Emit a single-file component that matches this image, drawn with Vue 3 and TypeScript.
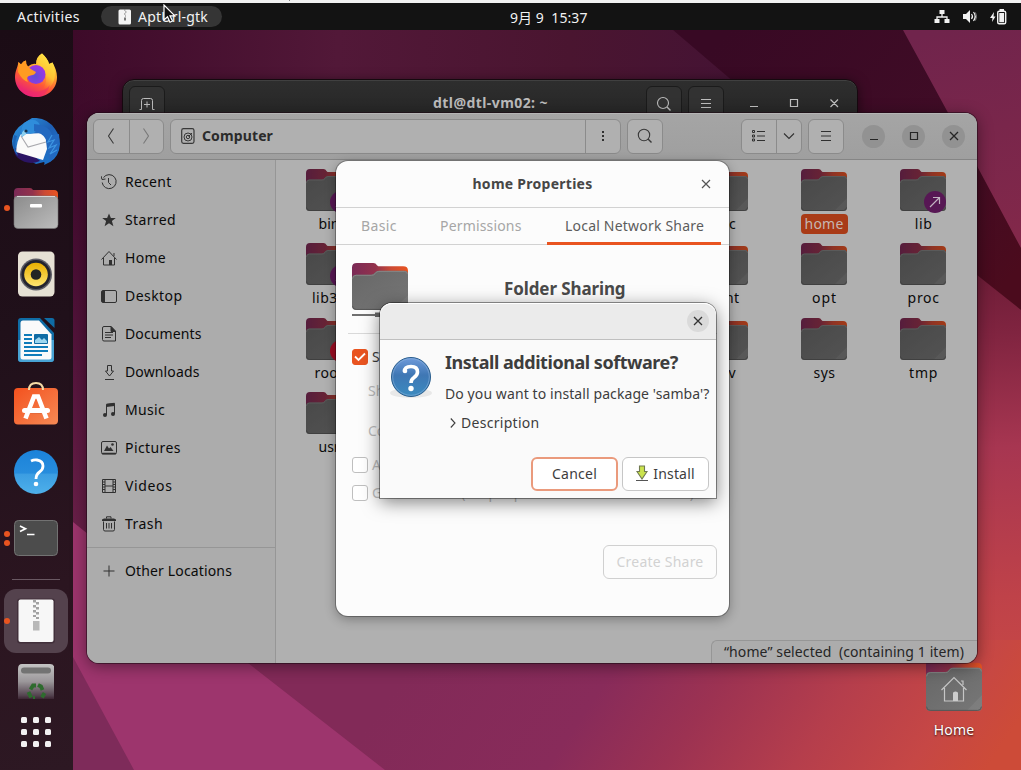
<script setup lang="ts">
interface Place { name: string; icon: string; width: number }
interface Entry { name: string; col: number; row: number; width: number; emblem?: 'link' | 'locked'; selected?: boolean }

const places: Place[] = [
  { name: 'Recent', icon: 'recent', width: 45.5 },
  { name: 'Starred', icon: 'star', width: 50 },
  { name: 'Home', icon: 'home', width: 40 },
  { name: 'Desktop', icon: 'desktop', width: 56.5 },
  { name: 'Documents', icon: 'doc', width: 75.5 },
  { name: 'Downloads', icon: 'download', width: 73.5 },
  { name: 'Music', icon: 'music', width: 39 },
  { name: 'Pictures', icon: 'picture', width: 55 },
  { name: 'Videos', icon: 'video', width: 46.5 },
  { name: 'Trash', icon: 'trash', width: 37 },
]

const entries: Entry[] = [
  { name: 'bin', col: 1, row: 1, width: 20, emblem: 'link' },
  { name: 'etc', col: 5, row: 1, width: 22 },
  { name: 'home', col: 6, row: 1, width: 38, selected: true },
  { name: 'lib', col: 7, row: 1, width: 16.5, emblem: 'link' },
  { name: 'lib32', col: 1, row: 2, width: 33, emblem: 'link' },
  { name: 'mnt', col: 5, row: 2, width: 27 },
  { name: 'opt', col: 6, row: 2, width: 24 },
  { name: 'proc', col: 7, row: 2, width: 31 },
  { name: 'root', col: 1, row: 3, width: 28, emblem: 'locked' },
  { name: 'srv', col: 5, row: 3, width: 21 },
  { name: 'sys', col: 6, row: 3, width: 21 },
  { name: 'tmp', col: 7, row: 3, width: 28 },
  { name: 'usr', col: 1, row: 4, width: 20 },
]

const dockApps = ['firefox', 'thunderbird', 'files', 'rhythmbox', 'writer', 'software', 'help', 'terminal']
const running: Record<string, number> = { files: 1, terminal: 2 }

// Tracks a label so that its text occupies the given width.
const vFit = {
  mounted(el: HTMLElement, binding: { value?: number }) {
    if (!binding.value) return
    const range = document.createRange()
    range.selectNodeContents(el)
    const natural = range.getBoundingClientRect().width
    const count = (el.textContent ?? '').trim().length
    el.style.letterSpacing = `${((binding.value + 1 - natural) / count).toFixed(3)}px`
  },
}
</script>

<template>
  <div class="screen">
    <svg class="wallpaper" viewBox="0 0 1021 770" preserveAspectRatio="none">
      <defs>
        <linearGradient id="wBase" gradientUnits="userSpaceOnUse" x1="73" y1="30" x2="735" y2="60">
          <stop offset="0" stop-color="#3d0a29" /><stop offset=".4" stop-color="#521838" /><stop offset=".75" stop-color="#4a1530" /><stop offset="1" stop-color="#451334" />
        </linearGradient>
        <linearGradient id="wLeft" gradientUnits="userSpaceOnUse" x1="80" y1="30" x2="80" y2="540">
          <stop offset="0" stop-color="#3d0a29" stop-opacity="0" /><stop offset=".5" stop-color="#4c1036" /><stop offset="1" stop-color="#6a2049" />
        </linearGradient>
        <linearGradient id="wDark" gradientUnits="userSpaceOnUse" x1="720" y1="40" x2="1000" y2="290">
          <stop offset="0" stop-color="#380924" /><stop offset=".6" stop-color="#400c26" /><stop offset="1" stop-color="#4b0b1d" />
        </linearGradient>
        <linearGradient id="wRight" gradientUnits="userSpaceOnUse" x1="940" y1="30" x2="1000" y2="240">
          <stop offset="0" stop-color="#70244c" /><stop offset="1" stop-color="#82284a" />
        </linearGradient>
        <linearGradient id="wEdge" gradientUnits="userSpaceOnUse" x1="980" y1="275" x2="1010" y2="770">
          <stop offset="0" stop-color="#6f1d38" /><stop offset=".12" stop-color="#802440" /><stop offset=".35" stop-color="#a73651" /><stop offset=".65" stop-color="#bf4249" /><stop offset=".78" stop-color="#c54646" /><stop offset="1" stop-color="#cc4a3b" />
        </linearGradient>
        <linearGradient id="wFloor" gradientUnits="userSpaceOnUse" x1="480" y1="560" x2="925" y2="860">
          <stop offset="0" stop-color="#822a58" /><stop offset=".32" stop-color="#882b5a" /><stop offset=".5" stop-color="#9c3252" /><stop offset=".7" stop-color="#b53e4c" /><stop offset=".88" stop-color="#c64745" /><stop offset="1" stop-color="#cd4b38" />
        </linearGradient>
      </defs>
      <rect width="1021" height="770" fill="url(#wBase)" />
      <rect y="30" width="110" height="600" fill="url(#wLeft)" />
      <path d="M673 30H1021V330L860 190Z" fill="url(#wDark)" />
      <path d="M903 30H1021V248L977 166Z" fill="url(#wRight)" />
      <path d="M860 185L977 275L1021 310V770H860Z" fill="url(#wEdge)" />
      <path d="M0 640H1021V770H0Z" fill="url(#wFloor)" />
      <path d="M0 467L73 522L248 663L385 770H0Z" fill="#9d356d" />
      <path d="M0 526L73 657L134 770H0Z" fill="#7e2b5a" />
    </svg>
    <svg class="defs" width="0" height="0">
      <defs>
        <linearGradient id="gBack" x1="0" y1="0" x2="1" y2="0">
          <stop offset="0" stop-color="#7a2a56" /><stop offset=".42" stop-color="#93324c" /><stop offset=".7" stop-color="#cc4a34" /><stop offset="1" stop-color="#e95420" />
        </linearGradient>
        <linearGradient id="gFront" x1="0" y1="0" x2="1" y2="1">
          <stop offset="0" stop-color="#676767" /><stop offset="1" stop-color="#777" />
        </linearGradient>
        <symbol id="folder" viewBox="0 0 46 42" preserveAspectRatio="none">
          <path d="M0 4Q0 0 4 0H17.5Q19.5 0 20.5 2L21.500 3H42Q46 3 46 7V22H0Z" fill="url(#gBack)" />
          <path d="M0 14Q0 10.500 3.500 10.500H15.500Q17.500 10.500 18.500 9Q20 7 22 7H43Q46 7 46 10V38.500Q46 42 42.500 42H3.500Q0 42 0 38.500Z" fill="url(#gFront)" />
          <path d="M0.500 14Q.5 11 3.500 11H16Q18 11 19 9.500Q20 7.500 22 7.500H43Q45.500 7.500 45.500 10" fill="none" stroke="#8a8a8a" stroke-width=".7" />
          <path d="M46 29V38.500Q46 42 42.500 42H33Z" fill="#fff" opacity=".06" />
          <path d="M.5 38.500Q.5 41.500 3.500 41.500H42.500Q45.500 41.500 45.500 38.500" fill="none" stroke="#555" stroke-width=".8" />
        </symbol>
      </defs>
    </svg>

    <div class="strip"><i></i></div>
    <header class="panel">
      <span v-fit="62" class="activities">Activities</span>
      <span class="app-pill">
        <svg width="14" height="16" viewBox="0 0 14 16"><rect x=".5" y=".5" width="12.500" height="15" rx="1.500" fill="#f4f4f4" /><path d="M6 1h1.500M7 3h1.500M6 5h1.500M7 7h1" stroke="#777" fill="none" /><rect x="6" y="8.500" width="2" height="3" fill="#777" /></svg>
        <span v-fit="69">AptUrl-gtk</span>
      </span>
      <span v-fit="76.500" class="clock">9月 9&nbsp; 15:37</span>
      <span class="tray">
        <svg width="16" height="15" viewBox="0 0 16 15"><path d="M5.500 1h5v4h-5zM.5 10h5v4h-5zM10.500 10h5v4h-5z" fill="#f2f2f2" /><path d="M8 4v4M3 11V8h10v3" stroke="#f2f2f2" stroke-width="1.300" fill="none" /></svg>
        <svg width="16" height="15" viewBox="0 0 16 15"><path d="M1 5h3l4-4v13l-4-4H1z" fill="#f2f2f2" /><path d="M9.500 5q2 2.500 0 5M11.500 3q3.500 4.500 0 9" stroke="#f2f2f2" stroke-width="1.200" fill="none" /><path d="M13.500 3.500q2 4 0 8" stroke="#888" fill="none" /></svg>
        <svg width="17" height="16" viewBox="0 0 17 16"><path d="M4 3L0 9h2.500L2 13l3.500-5.500H3.500z" fill="#f2f2f2" /><rect x="7.700" y="2.200" width="8" height="12.600" rx="1.500" fill="none" stroke="#f2f2f2" stroke-width="1.400" /><path d="M9.500 0h4.500v2H9.500zM9.300 4h4.800v9.200H9.300z" fill="#f2f2f2" /></svg>
      </span>
    </header>

    <nav class="dock">
      <div v-for="app in dockApps" :key="app" class="tile">
        <span v-if="running[app]" class="dots"><i v-for="n in running[app]" :key="n"></i></span>
        <svg v-if="app === 'firefox'" width="48" height="48" viewBox="0 0 48 48">
          <defs>
            <linearGradient id="ff" x1=".8" y1="0" x2=".3" y2="1"><stop offset="0" stop-color="#fff44f" /><stop offset=".35" stop-color="#ffb02e" /><stop offset=".65" stop-color="#ff5a35" /><stop offset="1" stop-color="#e31587" /></linearGradient>
            <linearGradient id="ffo" x1=".9" y1="0" x2=".5" y2="1"><stop offset="0" stop-color="#fff04a" /><stop offset=".6" stop-color="#ffc233" /><stop offset="1" stop-color="#ff7a2f" stop-opacity="0" /></linearGradient>
            <radialGradient id="ffg" cx=".45" cy=".6" r=".6"><stop offset="0" stop-color="#5b50d6" /><stop offset="1" stop-color="#a033e8" /></radialGradient>
          </defs>
          <path d="M30 1.500C34 5 36.500 9 37 12C39 11 40 11 40.500 10.500C43 15 45 20 45 25C45 37 36 45 24 45C12 45 3 36.500 3 25C3 19 5.500 16 6.500 10L9 12.500Q11 9 14 8.500Q13.500 12 16 14.500Q20 11 24 12Q24 5 30 1.500Z" fill="url(#ff)" />
          <path d="M30 1.500C34 5 36.500 9 37 12C39 11 40 11 40.500 10.500C44 18 44 28 39 34Q36 39 28 39Q35 34 34 25Q33 19 28 15Q23 10 25.500 6Q27 3 30 1.500Z" fill="url(#ffo)" />
          <circle cx="24" cy="22.500" r="9.500" fill="url(#ffg)" />
          <path d="M6.500 10L9 12.500Q11 9 14 8.500Q13.500 12 16 15Q20 18 24 20Q23 23 18.500 23.500Q13 24.500 16 30Q10 28 6 20Z" fill="#ff9b22" />
          <path d="M4 30Q10 41 22 40Q34 39 38 33Q35 44 24 45Q9 45 4 30Z" fill="#ee2a6b" opacity=".55" />
        </svg>
        <svg v-else-if="app === 'thunderbird'" width="48" height="48" viewBox="0 0 48 48">
          <defs><linearGradient id="tb" x1="0" y1="0" x2="1" y2="1"><stop offset="0" stop-color="#2d9be4" /><stop offset=".5" stop-color="#1f5fb4" /><stop offset="1" stop-color="#1a78d0" /></linearGradient></defs>
          <path d="M20 0Q35-1 43 11Q48 18 48 26Q47 39 38 44L32 47Q33 45 32 44L24 46L5 36Q0 31 0 23Q1 12 12 5Z" fill="url(#tb)" />
          <path d="M3 30Q1 36 6 40Q16 48 28 43L20 36Z" fill="#2b1464" />
          <path d="M9 16L33 15L35 31L31 42L4 34Q5 22 9 16Z" fill="#fafafa" />
          <path d="M9 18L16 29L34 24" fill="none" stroke="#a9a9ae" stroke-width="1.100" />
          <path d="M12 5Q20-1 26 4Q30 8 25 13Q20 17 15 15L10 19Q8 11 12 5Z" fill="#2f8ddb" />
          <path d="M10 19Q9 13 13 12Q15 14 14 16Z" fill="#8bd0f0" />
          <circle cx="14" cy="13" r="1.600" fill="#14314f" />
          <path d="M22 6Q37 7 40 17L47 16Q49 33 38 44Q36 38 36 31Q36 20 29 16L22 13Z" fill="#2369c0" />
          <path d="M40 17L36 24L42 22L37 30L44 27L38 36L45 32" fill="none" stroke="#3e97e2" stroke-width="1.200" />
          <path d="M2 17Q-1 32 6 38Q1 27 5 18Z" fill="#1b63b5" />
        </svg>
        <svg v-else-if="app === 'files'" width="48" height="48" viewBox="0 0 48 48">
          <defs><linearGradient id="fl" x1="0" y1="0" x2="1" y2="1"><stop offset="0" stop-color="#8b8b8b" /><stop offset="1" stop-color="#bdbdbd" /></linearGradient></defs>
          <path d="M2 8Q2 4 6 4H18Q20 4 21 6H42Q46 6 46 10V24H2Z" fill="url(#gBack)" />
          <rect x="2" y="12" width="44" height="32.500" rx="4" fill="url(#fl)" stroke="#777" stroke-width=".6" />
          <path d="M5 12.500H43" stroke="#d6d6d6" /><rect x="18" y="20" width="12" height="3.400" rx="1" fill="#fff" />
        </svg>
        <svg v-else-if="app === 'rhythmbox'" width="48" height="48" viewBox="0 0 48 48">
          <defs><linearGradient id="rb" x1="0" y1="0" x2="0" y2="1"><stop offset="0" stop-color="#eab000" /><stop offset="1" stop-color="#ffe570" /></linearGradient></defs>
          <rect x="6" y="1.500" width="36.500" height="45" rx="4.500" fill="#e6e1d4" />
          <circle cx="24" cy="24.500" r="16" fill="#5d5d66" /><circle cx="24" cy="24.500" r="14.500" fill="#24242e" />
          <circle cx="24" cy="24.500" r="11.800" fill="url(#rb)" /><circle cx="24" cy="24.500" r="5.300" fill="#242424" />
        </svg>
        <svg v-else-if="app === 'writer'" width="48" height="48" viewBox="0 0 48 48">
          <path d="M9 2H28L42 17V43Q42 46 39 46H9Q6 46 6 43V5Q6 2 9 2Z" fill="#0f6ca5" />
          <path d="M6 24H42V43Q42 46 39 46H9Q6 46 6 43Z" fill="#48a3d4" />
          <path d="M32 2H40Q42.500 2 42.500 4.500V12Z" fill="#0f6ca5" />
          <path d="M11 4.500H27L39.500 18.500V41Q39.500 43.500 37 43.500H11Q8.500 43.500 8.500 41V7Q8.500 4.500 11 4.500Z" fill="#fafafa" />
          <path d="M12 19H20M12 23H20M12 27H20M12 31H36M12 35H36M12 39H30" stroke="#0f7cba" stroke-width="2" />
          <rect x="22" y="18" width="14" height="10" rx="1" fill="#0f6ca5" /><path d="M23 27V24L27 21L30 24L32 22L35 25V27Z" fill="#9cd6ef" />
        </svg>
        <svg v-else-if="app === 'software'" width="48" height="48" viewBox="0 0 48 48">
          <defs><linearGradient id="so" x1="0" y1="0" x2="1" y2="1"><stop offset="0" stop-color="#f4511e" /><stop offset="1" stop-color="#f58a55" /></linearGradient></defs>
          <rect x="2" y="6" width="44" height="36.500" rx="4" fill="url(#so)" />
          <path d="M17 8C17 4 19 1 24 1S31 4 31 8" fill="none" stroke="#f6dba6" stroke-width="2" />
          <path d="M13.500 36.500L22 14.500H26L34.500 36.500" fill="none" stroke="#fff" stroke-width="4.600" />
          <rect x="10" y="26" width="28" height="5" rx="2.500" fill="#fff" />
          <path d="M19 31.500H29" stroke="#e46a3c" stroke-width="1" />
        </svg>
        <svg v-else-if="app === 'help'" width="48" height="48" viewBox="0 0 48 48">
          <defs><linearGradient id="he" x1="0" y1="0" x2="0" y2="1"><stop offset="0" stop-color="#1b82d9" /><stop offset=".53" stop-color="#278ddd" /><stop offset=".54" stop-color="#3b9de2" /><stop offset="1" stop-color="#4eb0ea" /></linearGradient></defs>
          <circle cx="24" cy="24" r="22" fill="url(#he)" />
          <path d="M19 13Q22 11.500 25 12Q31 13 31 18Q31 21.500 27.500 24Q24 26.500 24 31" fill="none" stroke="#fff" stroke-width="2.800" /><circle cx="24" cy="36" r="2.300" fill="#fff" />
        </svg>
        <svg v-else width="48" height="48" viewBox="0 0 48 48">
          <rect x="2.500" y="6.500" width="43" height="35" rx="4" fill="#4c4c4c" stroke="#727272" />
          <path d="M8 12L13.500 14.700L8 17.500M15 20.500H22.500" fill="none" stroke="#fff" stroke-width="1.700" />
        </svg>
      </div>
      <hr />
      <div class="tile">
        <span class="dots"><i></i></span>
        <div class="active-tile">
          <svg width="40" height="48" viewBox="0 0 40 48"><rect x="1" y="1.500" width="38" height="45" rx="3" fill="#3b2a33" opacity=".7" /><rect x="2.500" y="2.500" width="35" height="42.500" rx="2" fill="#f7f7f7" /><path d="M18.500 3V20M21.500 5V22" stroke="#a2a2a2" stroke-width="3" stroke-dasharray="2.500 2.500" /><rect x="17" y="24" width="6.500" height="9.500" fill="#b8b8b8" /></svg>
        </div>
      </div>
      <div class="tile bin">
        <svg width="36" height="35" viewBox="0 0 36 35"><defs><linearGradient id="tr" x1="0" y1="0" x2="0" y2="1"><stop offset="0" stop-color="#c4c4c4" /><stop offset=".5" stop-color="#9b979a" /><stop offset=".9" stop-color="#54434f" /><stop offset="1" stop-color="#3c2533" /></linearGradient></defs><path d="M0 5Q0 0 4 0H32Q36.500 0 36.500 5V35H0Z" fill="url(#tr)" /><rect x="3" y="3.500" width="30" height="6" rx="3" fill="#737373" /><path d="M12.500 25.500L15 21.500H18M20 21L23 22.500L24.500 26M10.500 28L13 33.500M26.500 29L24 33.500M15 34H17" stroke="#2e6b2e" stroke-width="3.800" fill="none" /></svg>
      </div>
      <div class="tile"><div class="grid-dots"><i v-for="n in 9" :key="n"></i></div></div>
    </nav>

    <section class="desktop-home">
      <div class="home-folder">
        <svg width="56" height="52"><use href="#folder" width="56" height="52" /></svg>
        <svg class="house" width="26" height="26" viewBox="0 0 26 26"><path d="M.5 14L13 1.500L25.500 14M3.500 12V25H22.500V12M20 5H22V9" fill="none" stroke="#c6c6c6" stroke-width="1.200" /><path d="M12 25V17Q12 15.500 14.500 15.500T17 17V25Z" fill="#ccc" /></svg>
      </div>
      <span v-fit="39.500">Home</span>
    </section>

    <section class="terminal">
      <span class="tbtn"><svg width="16" height="14" viewBox="0 0 16 14"><path d="M.5 12.500H2.500V3.500Q2.500 1.500 4.500 1.500H11.500Q13.500 1.500 13.500 3.500V12.500H15.500M8 4.500V10.500M5 7.500H11" fill="none" stroke="#bdbdbd" /></svg></span>
      <b v-fit="114">dtl@dtl-vm02: ~</b>
      <span class="tbtn"><svg width="16" height="16" viewBox="0 0 16 16"><circle cx="7" cy="7" r="5.500" fill="none" stroke="#bdbdbd" stroke-width="1.100" /><path d="M11 11L14.500 14.500" stroke="#bdbdbd" stroke-width="1.400" /></svg></span>
      <span class="tbtn"><svg width="12" height="12" viewBox="0 0 12 12"><path d="M1 1.500H11M1 5.500H11M1 9.500H11" stroke="#bdbdbd" /></svg></span>
      <svg class="tctl" width="92" height="12" viewBox="0 0 92 12"><path d="M2 9.500H10M42.500 2.500H49.500V9.500H42.500ZM82.500 2.500L90 10M90 2.500L82.500 10" fill="none" stroke="#c2c2c2" stroke-width="1.200" /></svg>
    </section>

    <section class="files">
      <header class="fbar">
        <div class="group nav"><span><svg width="8" height="16" viewBox="0 0 8 16"><path d="M6.500 .5L1.500 8L6.500 15.500" fill="none" stroke="#3a3a3a" stroke-width="1.100" /></svg></span><span><svg width="8" height="16" viewBox="0 0 8 16"><path d="M1.500 .5L6.500 8L1.500 15.500" fill="none" stroke="#787878" stroke-width="1.100" /></svg></span></div>
        <div class="group path">
          <div class="crumb"><svg width="14" height="16" viewBox="0 0 14 16"><rect x=".7" y=".7" width="12.300" height="14.600" rx="1.800" fill="none" stroke="#383838" stroke-width="1.200" /><circle cx="7" cy="9" r="4" fill="none" stroke="#383838" /><circle cx="7" cy="9" r="1.700" fill="none" stroke="#383838" /><path d="M7.500 8.500L11 5" stroke="#383838" /></svg><b v-fit="70">Computer</b></div>
          <span><svg width="4" height="12" viewBox="0 0 4 12"><path d="M1 1h2v2H1zM1 5h2v2H1zM1 9h2v2H1z" fill="#303030" /></svg></span>
        </div>
        <div class="group one"><span><svg width="16" height="16" viewBox="0 0 16 16"><circle cx="7" cy="7" r="5.700" fill="none" stroke="#383838" stroke-width="1.100" /><path d="M11 11L14.500 14.500" stroke="#383838" stroke-width="1.400" /></svg></span></div>
        <div class="group view"><span><svg width="14" height="12" viewBox="0 0 14 12"><path d="M.5 .5h2v2h-2zM.5 5h2v2h-2zM.5 9h2v2h-2zM5 1.500H13M5 6H13M5 10.500H13" fill="none" stroke="#303030" /></svg></span><span class="narrow"><svg width="12" height="8" viewBox="0 0 12 8"><path d="M1 1.500L6 6.500L11 1.500" fill="none" stroke="#303030" stroke-width="1.100" /></svg></span></div>
        <div class="group one"><span><svg width="12" height="12" viewBox="0 0 12 12"><path d="M1 1.500H11M1 6H11M1 10.500H11" stroke="#303030" /></svg></span></div>
        <div class="controls">
          <i><svg width="10" height="10" viewBox="0 0 10 10"><path d="M1 8.500H9" stroke="#252525" stroke-width="1.200" /></svg></i>
          <i><svg width="10" height="10" viewBox="0 0 10 10"><path d="M1.500 1.500H8.500V8.500H1.500Z" fill="none" stroke="#252525" stroke-width="1.200" /></svg></i>
          <i><svg width="10" height="10" viewBox="0 0 10 10"><path d="M1 1L9 9M9 1L1 9" stroke="#252525" stroke-width="1.300" /></svg></i>
        </div>
      </header>
      <div class="fmain">
        <aside>
          <div v-for="p in places" :key="p.name" class="place">
            <svg class="picon" width="16" height="16" viewBox="0 0 16 16" fill="none" stroke="#303030">
              <template v-if="p.icon === 'recent'"><path d="M2.500 3.500A7 7 0 1 1 1.200 8.500" /><path d="M0 2L1 5.500L4.500 5M7.500 4V8.500L10 11" /></template>
              <path v-else-if="p.icon === 'star'" d="M8 1.500L9.900 6H14.800L10.900 9.100L12.400 14.200L8 11.200L3.600 14.200L5.100 9.100L1.200 6H6.100Z" fill="#303030" stroke="none" />
              <template v-else-if="p.icon === 'home'"><path d="M.5 9.500L8 1.500L15.500 9.500M2.500 8V15H13.500V8M13 3V6" /><path d="M8 10h3v5H8z" fill="#303030" stroke="none" /></template>
              <template v-else-if="p.icon === 'desktop'"><rect x=".5" y="2.500" width="15" height="12" rx="1.500" /><path d="M1 3h3v11H1z" fill="#303030" stroke="none" /></template>
              <template v-else-if="p.icon === 'doc'"><path d="M3 .5H10L14.500 5V15H3Q1.500 15 1.500 13.500V2Q1.500 .5 3 .5ZM4 6.500H12M4 9H12M4 11.500H10" /><path d="M10 .5L14.500 5.500H10Z" fill="#303030" /></template>
              <path v-else-if="p.icon === 'download'" d="M6.500 1.500H10.500V7H12.500L8.500 12L4.500 7H6.500ZM4 15.500H13" />
              <template v-else-if="p.icon === 'music'"><path d="M5.500 13V2.500L13.500 1.500V12" /><path d="M5.500 1.700L13.500 .8V4L5.500 5Z" fill="#303030" stroke="none" /><circle cx="4" cy="13" r="2" fill="#303030" stroke="none" /><circle cx="12" cy="12" r="2" fill="#303030" stroke="none" /></template>
              <template v-else-if="p.icon === 'picture'"><rect x=".5" y="1.500" width="15" height="12.500" rx="1.500" /><path d="M3 11L6 5.500L8 8.500L9.500 7L12.500 11Z" fill="#303030" stroke="none" /><circle cx="11.500" cy="4.500" r="1.300" fill="#303030" stroke="none" /><path d="M1 13.500H15" stroke-width="1.500" /></template>
              <path v-else-if="p.icon === 'video'" d="M1.500 1.500H14.500V14.500H1.500ZM4 1.500V14.500M12 1.500V14.500M4 8H12M1.500 4H4M1.500 6.500H4M1.500 9H4M1.500 11.500H4M12 4H14.500M12 6.500H14.500M12 9H14.500M12 11.500H14.500" />
              <template v-else><path d="M2.500 5.500V13.500Q2.500 15 4 15H12Q13.500 15 13.500 13.500V5.500M5.500 7V12.500M8 7V12.500M10.500 7V12.500M5.500 2.500V.8H10V2.500" /><path d="M1 5V3.500L3 2.500H13L15 3.500V5Z" fill="#303030" stroke="none" /></template>
            </svg>
            <span v-fit="p.width">{{ p.name }}</span>
          </div>
          <hr />
          <div class="place"><svg class="picon" width="16" height="16" viewBox="0 0 16 16"><path d="M8 2.500V13.500M2.500 8H13.500" stroke="#303030" /></svg><span v-fit="106">Other Locations</span></div>
        </aside>
        <main>
          <div v-for="e in entries" :key="e.name" class="entry" :style="{ gridColumn: e.col, gridRow: e.row }">
            <div class="ficon">
              <svg class="dim" width="46" height="42"><use href="#folder" width="46" height="42" /></svg>
              <svg v-if="e.emblem" class="emblem" width="22" height="22" viewBox="0 0 22 22"><circle cx="11" cy="11" r="11" :fill="e.emblem === 'link' ? '#571754' : '#9a0d22'" /><path v-if="e.emblem === 'link'" d="M6 16L15.500 6.500M9 6.500H15.500V13" fill="none" stroke="#c2b4c2" stroke-width="1.200" /><path v-else d="M7 7L15 15M15 7L7 15" stroke="#c9b5b8" stroke-width="1.500" /></svg>
            </div>
            <span class="label" :class="{ selected: e.selected }"><span v-fit="e.width">{{ e.name }}</span></span>
          </div>
        </main>
      </div>
      <div class="status"><span v-fit="239">“home” selected&nbsp; (containing 1 item)</span></div>
    </section>

    <section class="props">
      <header><b v-fit="119">home Properties</b><svg class="pclose" width="10" height="10" viewBox="0 0 10 10"><path d="M1 1L9 9M9 1L1 9" stroke="#555" stroke-width="1.200" /></svg></header>
      <div class="tabs"><div><span v-fit="35">Basic</span></div><div><span v-fit="80.500">Permissions</span></div><div class="on"><span v-fit="138">Local Network Share</span></div></div>
      <div class="pbody">
        <div class="phead">
          <div><svg width="56" height="54"><use href="#folder" width="56" height="47" /><path d="M0 52H56" stroke="#707070" stroke-width="2" /><rect x="23" y="49.500" width="9" height="4.500" fill="#666" /></svg></div>
          <b v-fit="120.500">Folder Sharing</b>
        </div>
        <hr />
        <div class="row first"><i class="check on"><svg width="12" height="10" viewBox="0 0 12 10"><path d="M1 4.500L4.500 8L11 1.500" fill="none" stroke="#fff" stroke-width="1.800" /></svg></i><span>Share this folder</span></div>
        <div class="row field"><span>Share name:</span></div>
        <div class="row field"><span>Comment:</span></div>
        <div class="row opt"><i class="check"></i><span>Allow others to create and delete files</span></div>
        <div class="row opt"><i class="check"></i><span v-fit="321">Guest access (for people without a user account)</span></div>
        <button class="create"><span v-fit="86">Create Share</span></button>
      </div>
    </section>

    <section class="install">
      <header><i><svg width="10" height="10" viewBox="0 0 10 10"><path d="M1 1L9 9M9 1L1 9" stroke="#333" stroke-width="1.300" /></svg></i></header>
      <div class="ibody">
        <svg class="question" width="44" height="44" viewBox="0 0 44 44">
          <defs><linearGradient id="qu" x1="0" y1="0" x2="0" y2="1"><stop offset="0" stop-color="#6f9bdb" /><stop offset=".45" stop-color="#3f77b4" /><stop offset="1" stop-color="#3b8bc0" /></linearGradient></defs>
          <ellipse cx="22" cy="37" rx="21" ry="5" fill="#000" opacity=".07" />
          <circle cx="22" cy="21" r="19.500" fill="url(#qu)" stroke="#285d8d" /><circle cx="22" cy="21" r="18.300" fill="none" stroke="#8eb4dd" stroke-width=".8" opacity=".7" />
          <path d="M15.500 15.500Q15.500 10.500 22 10.500T28.500 16Q28.500 19 25 21.500Q22 23.500 22 27" fill="none" stroke="#fff" stroke-width="3.600" /><circle cx="16" cy="15" r="2.300" fill="#fff" /><circle cx="22" cy="32.500" r="2.700" fill="#fff" />
        </svg>
        <div class="itext">
          <h1><span v-fit="232">Install additional software?</span></h1>
          <p><span v-fit="263.500">Do you want to install package 'samba'?</span></p>
          <p class="desc"><svg width="6" height="10" viewBox="0 0 6 10"><path d="M.8 .5L5 5L.8 9.500" fill="none" stroke="#3d3d3d" stroke-width="1.100" /></svg><span v-fit="77.500">Description</span></p>
        </div>
      </div>
      <footer>
        <button class="cancel"><span v-fit="44">Cancel</span></button>
        <button><svg width="12" height="17" viewBox="0 0 12 17"><path d="M3.500 1H8.500V6.500H11L6 14L1 6.500H3.500Z" fill="#cbe34d" stroke="#707a50" stroke-width="1.100" /><path d="M0 15.500H12" stroke="#555" /></svg><span v-fit="40.500">Install</span></button>
      </footer>
    </section>

    <svg class="cursor" width="14" height="20" viewBox="0 0 14 20"><path d="M1 1V16L4.500 12.800L7 18.200L9.500 17L7 11.800H11.800Z" fill="#111" stroke="#fff" stroke-width="1.200" /></svg>
  </div>
</template>

<style>
html, body { margin: 0; overflow: hidden; }
</style>

<style scoped>
.screen { position: relative; width: 1021px; height: 770px; overflow: hidden; font: 14px/20px "Noto Sans", "Noto Sans CJK SC", sans-serif; color: #3d3d3d; white-space: nowrap; }
.screen * { box-sizing: border-box; }
svg { display: block; flex: none; }
.wallpaper { position: absolute; inset: 0; width: 1021px; height: 770px; }
.defs { position: absolute; }
.strip { position: relative; height: 3px; background: #f1f1f1; display: flex; padding-left: 289px; }
.strip i { width: 1px; height: 1px; background: #888; }
.panel { position: relative; height: 27px; background: #131313; color: #f2f2f2; display: flex; align-items: center; padding: 0 14px 0 17px; }
.activities { width: 84px; }
.app-pill { display: flex; align-items: center; width: 121px; height: 21px; border-radius: 11px; background: #353535; padding-left: 17px; gap: 6px; }
.clock { margin-left: 288px; padding-top: 3px; }
.tray { margin-left: auto; display: flex; align-items: center; gap: 12px; }

.dock { position: absolute; left: 0; top: 30px; width: 73px; height: 740px; padding-top: 13px; background: linear-gradient(165deg, #1b0c15 0%, #20101a 40%, #2b1520 75%, #2d1823 100%); }
.tile { position: relative; height: 66px; width: 72px; display: flex; align-items: center; justify-content: center; }
.dots { position: absolute; left: 4px; top: 0; height: 66px; display: flex; flex-direction: column; justify-content: center; gap: 3px; }
.dots i { width: 6px; height: 6px; border-radius: 50%; background: #e95420; }
.dock hr { border: 0; width: 48px; height: 1px; margin: 8px 12px; background: #6a5963; }
.active-tile { width: 64px; height: 64px; border-radius: 12px; background: #54424d; display: flex; align-items: center; justify-content: center; }
.tile.bin { height: 45px; align-items: flex-end; }
.grid-dots { display: grid; grid-template-columns: repeat(3, 6px); gap: 6px; }
.grid-dots i { height: 6px; border-radius: 1.500px; background: #f2f0f1; }

.desktop-home { position: absolute; left: 914px; top: 659px; width: 80px; display: flex; flex-direction: column; align-items: center; gap: 9px; color: #fff; text-shadow: 0 1px 2px rgba(0, 0, 0, .8); }
.home-folder { position: relative; }
.home-folder .house { position: absolute; left: 15px; top: 17px; }

.terminal { position: absolute; left: 122px; top: 79px; width: 736px; height: 120px; border-radius: 12px 12px 0 0; background: linear-gradient(#2e2e2e, #262626 40px); border: 1px solid #16090f; box-shadow: inset 0 1px #404040, 0 2px 12px rgba(0, 0, 0, .5); display: flex; align-items: flex-start; padding: 6px 0 0 6px; color: #bdbdbd; }
.terminal b { width: 116px; margin: 7px 97px 0 262px; }
.tbtn { width: 36px; height: 36px; flex: none; margin-right: 6px; border: 1px solid #1b1b1b; border-radius: 6px; background: #323232; display: flex; align-items: center; justify-content: center; }
.tctl { margin: 11px 0 0 18px; }

.files { position: absolute; left: 87px; top: 113px; width: 890px; height: 550px; border-radius: 12px; background: #b0b0b0; color: #0a0a0a; overflow: hidden; box-shadow: 0 0 0 1px rgba(30, 10, 20, .55), 0 3px 16px rgba(0, 0, 0, .45); display: flex; flex-direction: column; }
.fbar { height: 47px; flex: none; background: linear-gradient(#a5a5a5, #9f9f9f); border-bottom: 1px solid #858585; box-shadow: inset 0 1px #b5b5b5; display: flex; align-items: center; gap: 6px; padding: 0 12px 0 6px; }
.group { height: 35px; border: 1px solid #8b8b8b; border-radius: 6px; background: #b0b0b0; display: flex; }
.group > span { width: 35px; display: flex; align-items: center; justify-content: center; }
.group > span.narrow { width: 25px; }
.group > :nth-child(2) { border-left: 1px solid #8b8b8b; }
.nav { width: 71px; }
.path { width: 451px; }
.crumb { flex: 1; display: flex; align-items: center; gap: 7px; padding-left: 10px; color: #2b2b2b; }
.one { width: 36px; }
.view { margin-left: 72px; width: 61px; }
.controls { margin-left: auto; display: flex; gap: 17px; }
.controls i { width: 23px; height: 23px; border-radius: 50%; background: #929292; display: flex; align-items: center; justify-content: center; }
.fmain { flex: 1; display: flex; }
aside { width: 189px; flex: none; background: #acacac; border-right: 1px solid #969696; padding-top: 3px; }
.place { height: 38px; display: flex; align-items: center; gap: 8px; padding-left: 14px; }
aside hr { border: 0; height: 1px; margin: 4px 0; background: #969696; }
main { display: grid; grid-template-columns: repeat(7, 99.100px); grid-auto-rows: 74.300px; align-content: start; padding: 9px 0 0 3px; }
.entry { display: flex; flex-direction: column; align-items: center; gap: 3px; }
.ficon { position: relative; height: 42px; }
.dim { filter: brightness(.7); }
.emblem { position: absolute; left: 24px; top: 22px; }
.label { padding: 0 4px; border-radius: 4px; margin-left: 1px; }
.label.selected { background: #a93b17; color: #c5b6b1; margin-left: 0; }
.status { position: absolute; right: 0; bottom: 0; width: 266px; height: 23px; border: solid #969696; border-width: 1px 0 0 1px; border-top-left-radius: 6px; background: #acacac; color: #262626; padding: 1px 0 0 12px; }

.props { position: absolute; left: 336px; top: 161px; width: 393px; height: 455px; border-radius: 12px; background: #fcfcfc; box-shadow: 0 0 0 1px rgba(0, 0, 0, .28), 0 3px 12px rgba(0, 0, 0, .32); overflow: hidden; }
.props header { position: relative; height: 47px; border-bottom: 1px solid #d2d2d2; display: flex; align-items: center; justify-content: center; color: #464646; }
.pclose { position: absolute; right: 18px; top: 18px; }
.tabs { height: 37px; border-bottom: 1px solid #d2d2d2; display: flex; padding-left: 7px; color: #a6a6a6; }
.tabs > div { height: 37px; display: flex; align-items: center; padding: 0 18px 2px; }
.tabs > div:nth-child(2) { width: 132px; }
.tabs > div:first-child { width: 72px; margin-right: 0; }
.tabs > div:nth-child(2) { padding-left: 25px; }
.tabs > div.on { width: 174px; border-bottom: 3px solid #e95420; padding-top: 3px; color: #5c5c5c; }
.pbody { padding: 18px 12px 0; display: flex; flex-direction: column; }
.phead { display: flex; height: 70px; padding-left: 4px; }
.phead b { font-size: 17px; margin: 16px 0 0 96px; color: #4a4a4a; }
.pbody hr { border: 0; height: 1px; width: 100%; margin: 0; background: #d9d9d9; }
.row { display: flex; align-items: center; gap: 4px; padding-left: 4px; height: 28px; }
.row.first { height: 46px; }
.row.field { height: 40px; padding-left: 20px; color: #bdbdbd; }
.row.first + .field { height: 22px; }
.row.field + .field { height: 58px; }
.row.opt { color: #bdbdbd; }
.row.field + .opt { margin-top: -9px; }
.check { width: 16px; height: 16px; border: 1px solid #bfbfbf; border-radius: 3px; background: #fff; display: flex; align-items: center; justify-content: center; flex: none; }
.check.on { background: #e95420; border-color: #e95420; }
button { font: inherit; height: 34px; padding: 0 0 1px; border: 1px solid #c6c6c6; border-radius: 6px; background: #fff; color: #3d3d3d; display: flex; align-items: center; justify-content: center; }
.create { width: 114px; align-self: flex-end; margin-top: 38px; color: #d2d2d2; background: #fcfcfc; border-color: #d0d0d0; }

.install { position: absolute; left: 380px; top: 303px; width: 336px; height: 195px; border-radius: 12px 12px 0 0; background: #fafafa; box-shadow: 0 0 0 1px rgba(0, 0, 0, .4), 0 4px 18px rgba(0, 0, 0, .5); }
.install header { height: 37px; border-radius: 12px 12px 0 0; background: #ebebeb; border-bottom: 1px solid #bfbfbf; box-shadow: inset 0 1px #fff; display: flex; align-items: center; justify-content: flex-end; padding-right: 7px; }
.install header i { width: 22px; height: 22px; border-radius: 50%; background: #dadada; display: flex; align-items: center; justify-content: center; }
.ibody { display: flex; padding: 10px 0 0 9px; gap: 12px; }
.question { margin-top: 6px; }
h1 { margin: 0; font-size: 18px; line-height: 24px; font-weight: 700; }
p { margin: 10px 0 0; }
.desc { display: flex; align-items: center; gap: 5px; padding-left: 5px; margin-top: 9px; }
footer { display: flex; justify-content: flex-end; gap: 4px; padding: 24px 7px 0 0; }
footer button { width: 87px; gap: 5px; }
.cancel { border: 2px solid #ea9a7c; }
.cursor { position: absolute; left: 163px; top: 4px; }
</style>
